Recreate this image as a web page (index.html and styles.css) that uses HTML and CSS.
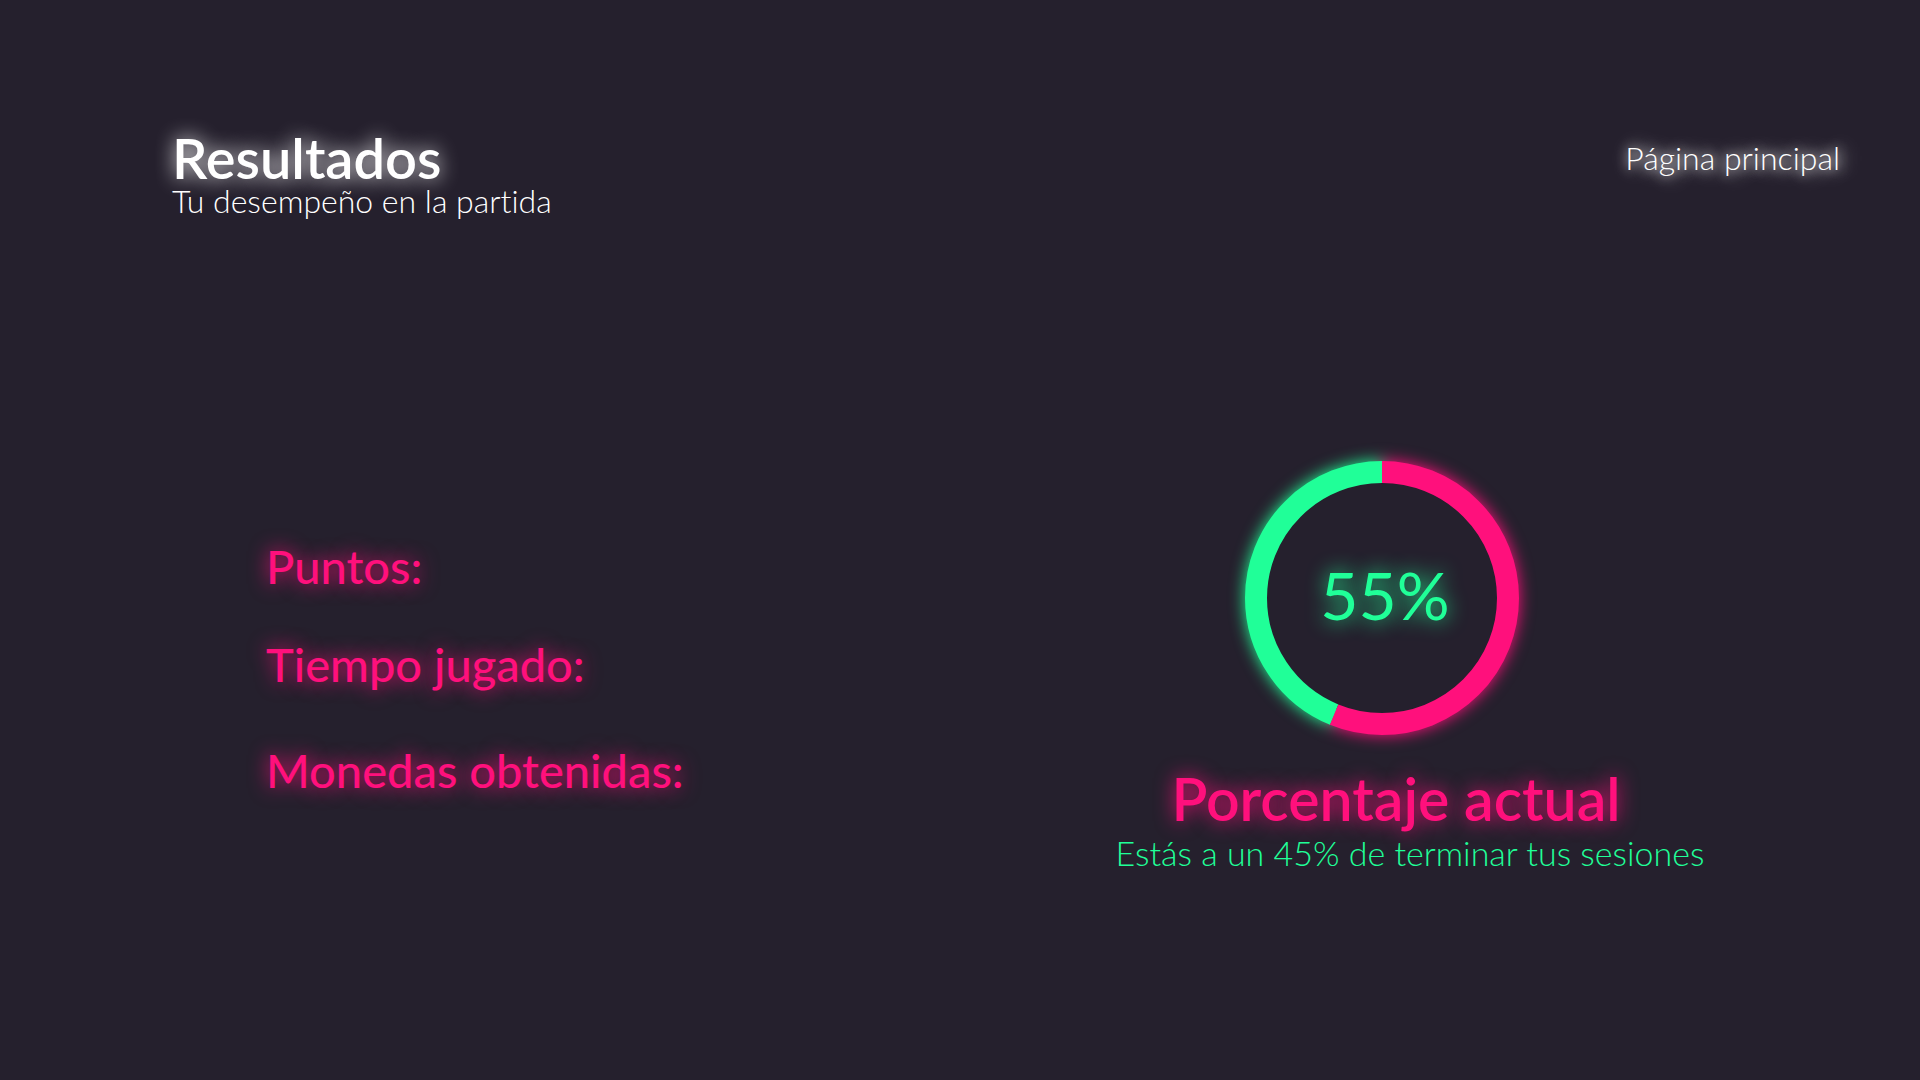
FILE: index.html
```html
<!DOCTYPE html>
<html lang="es">
<head>
  <meta charset="utf-8">
  <meta name="viewport" content="width=device-width, initial-scale=1">
  <title>Resultados</title>
  <link rel="stylesheet" href="styles.css">
</head>
<body>
  <header class="header">
    <div>
      <h1 class="title">Resultados</h1>
      <p class="subtitle">Tu desempeño en la partida</p>
    </div>
    <nav class="nav">
      <a class="home-link" href="#">Página principal</a>
    </nav>
  </header>

  <main class="results">
    <section class="stats">
      <h2 class="stat">Puntos:</h2>
      <h2 class="stat">Tiempo jugado:</h2>
      <h2 class="stat stat-coins">Monedas obtenidas:</h2>
    </section>

    <section class="progress">
      <div class="chart">
        <svg class="ring" viewBox="0 0 274 274" aria-hidden="true">
          <g class="ring-glow">
            <circle class="arc arc-left" cx="137" cy="137" r="126" pathLength="1000"/>
            <circle class="arc arc-done" cx="137" cy="137" r="126" pathLength="1000"/>
          </g>
          <circle class="ring-hole" cx="137" cy="137" r="120"/>
          <circle class="arc arc-left" cx="137" cy="137" r="126" pathLength="1000"/>
          <circle class="arc arc-done" cx="137" cy="137" r="126" pathLength="1000"/>
        </svg>
        <span class="percent">55%</span>
      </div>
      <h2 class="progress-title">Porcentaje actual</h2>
      <p class="progress-text">Estás a un 45% de terminar tus sesiones</p>
    </section>
  </main>
</body>
</html>
```
FILE: styles.css
```css
:root {
  --background: #25202d;
  --pink: #ff107c;
  --green: #20ff98;
}

* {
  box-sizing: border-box;
}

body {
  margin: 0;
  background: var(--background);
  color: #fff;
  font-family: Lato, "Open Sans", sans-serif;
  font-variant-ligatures: none;
}

h1,
h2,
p {
  margin: 0;
}

.header {
  display: flex;
  justify-content: space-between;
  align-items: flex-start;
  padding: 130px 80px 0 172px;
}

.title {
  font-size: 56px;
  font-weight: 600;
  line-height: 56px;
  text-shadow: 0 0 20px #fff;
}

.subtitle,
.home-link {
  font-size: 32px;
  font-weight: 300;
  line-height: 30px;
}

.nav {
  padding-top: 13px;
}

.home-link {
  display: block;
  color: #fff;
  text-decoration: none;
  text-shadow: 0 0 12px #fff, 4px 0 20px #fff;
}

.results {
  display: grid;
  grid-template-columns: 15fr 17fr;
  align-items: center;
  padding: 245px 0 64px;
}

.stats {
  display: grid;
  gap: 50px;
  padding-left: 266px;
}

.stat {
  color: var(--pink);
  font-size: 47px;
  font-weight: 500;
  line-height: 48px;
  text-shadow: 0 0 20px var(--pink);
}

.stat-coins {
  padding-top: 8px;
}

.progress {
  display: flex;
  flex-direction: column;
  align-items: center;
}

.chart {
  display: grid;
  place-items: center;
  width: 274px;
  margin: 0 56px 32px 0;
}

.ring,
.percent {
  grid-area: 1 / 1;
}

.ring {
  width: 100%;
  overflow: visible;
}

.ring-glow {
  filter: blur(8px);
}

.arc {
  fill: none;
  stroke-width: 22;
  transform: rotate(-90deg);
  transform-origin: 137px 137px;
}

.arc-done {
  stroke: var(--pink);
  stroke-dasharray: 562 438;
}

.arc-left {
  stroke: var(--green);
  stroke-dasharray: 438 562;
  stroke-dashoffset: -562;
}

.ring-hole {
  fill: var(--background);
}

.percent {
  padding: 0 0 6px 6px;
  color: var(--green);
  font-size: 66px;
  font-weight: 400;
  line-height: 80px;
  text-shadow: 0 0 20px var(--green);
}

.progress-title {
  margin-right: 28px;
  color: var(--pink);
  font-size: 59px;
  font-weight: 600;
  line-height: 64px;
  text-shadow: 0 0 20px var(--pink);
}

.progress-text {
  color: var(--green);
  font-size: 34px;
  font-weight: 300;
  line-height: 44px;
}
```
